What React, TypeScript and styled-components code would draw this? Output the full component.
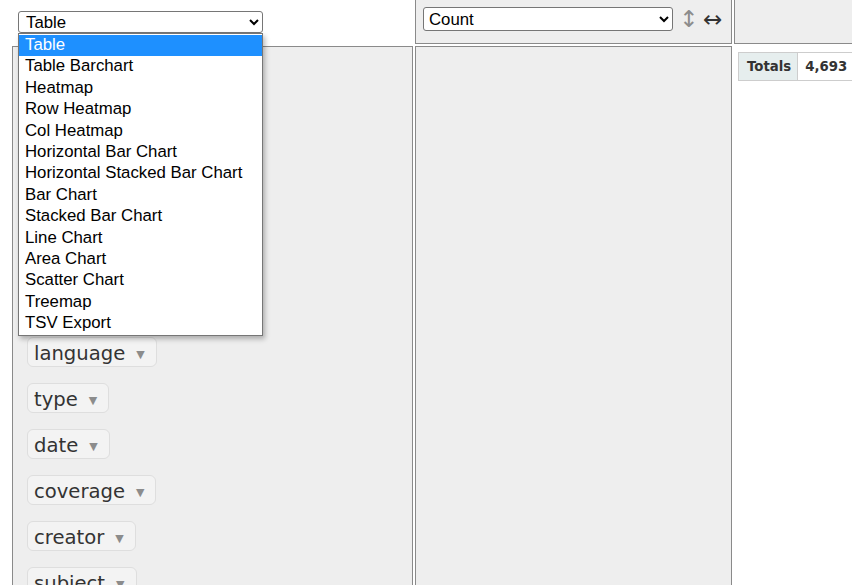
import React from "react";
import styled, { createGlobalStyle } from "styled-components";

const Global = createGlobalStyle`
  html, body { margin: 0; padding: 0; background: #fff; }
  body { font-family: "DejaVu Sans", Verdana, sans-serif; color: #333; }
`;

const Page = styled.div`
  width: 852px;
  height: 585px;
  overflow: hidden;
  position: relative;
`;

const Layout = styled.div`
  display: grid;
  grid-template-columns: 401px 317px 300px;
  grid-template-rows: 44px 560px;
  gap: 2px;
  margin-left: 12px;
`;

const Cell = styled.div<{ $panel?: boolean; $top?: boolean; $raised?: boolean }>`
  box-sizing: border-box;
  position: relative;
  background: ${(p) => (p.$panel ? "#eeeeee" : "#ffffff")};
  border: ${(p) => (p.$panel ? "1px solid #8a8a8a" : "none")};
  ${(p) => (p.$top ? "border-top: none;" : "")}
  ${(p) => (p.$raised ? "z-index: 5;" : "")}
`;

const RendererCell = styled(Cell)`
  padding: 11px 0 0 6px;
`;

const ValsCell = styled(Cell)`
  display: flex;
  align-items: flex-start;
  padding: 7px 0 0 7px;
`;

const UnusedCell = styled(Cell)`
  padding: 6px;
`;

const OutputCell = styled(Cell)`
  padding: 6px 0 0 4px;
`;

const NativeSelect = styled.select<{ $w: number; $h: number; $inset: number }>`
  box-sizing: border-box;
  width: ${(p) => p.$w}px;
  height: ${(p) => p.$h}px;
  padding: 0 6px 0 ${(p) => p.$inset}px;
  font-family: "Liberation Sans", Arial, sans-serif;
  font-size: 16.8px;
  color: #000;
  background: #fff;
  border: 1px solid #767676;
  border-radius: 3px;
  margin: 0;
`;

const OrderToggle = styled.span<{ $muted?: boolean }>`
  display: inline-block;
  width: 18px;
  margin-left: 6px;
  text-align: center;
  font-family: "DejaVu Sans", sans-serif;
  font-size: 23px;
  line-height: 24px;
  color: ${(p) => (p.$muted ? "#8c8c8c" : "#333")};
  cursor: pointer;
`;

const Popup = styled.ul`
  position: absolute;
  left: 6px;
  top: 33px;
  width: 245px;
  box-sizing: border-box;
  margin: 0;
  padding: 1px 0 1px;
  list-style: none;
  background: #fff;
  border: 1px solid #767676;
  box-shadow: 2px 3px 5px rgba(0, 0, 0, 0.28);
  z-index: 10;
`;

const PopupOption = styled.li<{ $active?: boolean }>`
  height: 21.4px;
  box-sizing: border-box;
  padding: 0 0 2px 6px;
  line-height: 19.4px;
  font-family: "Liberation Sans", Arial, sans-serif;
  font-size: 16.8px;
  white-space: nowrap;
  color: ${(p) => (p.$active ? "#fff" : "#000")};
  background: ${(p) => (p.$active ? "#1e90ff" : "transparent")};
`;

const AttrList = styled.ul`
  list-style: none;
  margin: 0;
  padding: 8px 0 0 8px;
  display: flex;
  flex-direction: column;
  align-items: flex-start;
  gap: 16px;
`;

const Attr = styled.li`
  display: inline-flex;
  align-items: center;
  box-sizing: border-box;
  height: 30px;
  padding: 2px 6px 0;
  border: 1px solid #dedede;
  border-radius: 6px;
  background: #f3f3f3;
  font-size: 19.6px;
  color: #333;
  white-space: nowrap;
  cursor: move;
`;

const Triangle = styled.span`
  color: #8c8c8c;
  font-size: 11px;
  margin: 2px 5px 0 11px;
  cursor: pointer;
`;

const TotalsTable = styled.table`
  border-collapse: collapse;
  font-family: "DejaVu Sans", Verdana, sans-serif;
  font-size: 13.3px;
`;

const TotalsHead = styled.th`
  background: #e6eeee;
  border: 1px solid #cdcdcd;
  padding: 6px 6px 6px 8px;
  font-weight: bold;
  text-align: left;
  color: #333;
`;

const TotalsValue = styled.td`
  background: #fff;
  border: 1px solid #cdcdcd;
  padding: 6px 8px 6px 7px;
  font-weight: bold;
  text-align: right;
  color: #333;
`;

const renderers = [
  "Table",
  "Table Barchart",
  "Heatmap",
  "Row Heatmap",
  "Col Heatmap",
  "Horizontal Bar Chart",
  "Horizontal Stacked Bar Chart",
  "Bar Chart",
  "Stacked Bar Chart",
  "Line Chart",
  "Area Chart",
  "Scatter Chart",
  "Treemap",
  "TSV Export",
];

const attributes = [
  "title",
  "identifier",
  "publisher",
  "format",
  "source",
  "rights",
  "language",
  "type",
  "date",
  "coverage",
  "creator",
  "subject",
  "contributor",
];

export default function App() {
  return (
    <Page>
      <Global />
      <Layout>
        <RendererCell $raised>
          <NativeSelect $w={245} $h={22} $inset={3} defaultValue="Table">
            {renderers.map((r) => (
              <option key={r} value={r}>
                {r}
              </option>
            ))}
          </NativeSelect>
          <Popup>
            {renderers.map((r, i) => (
              <PopupOption key={r} $active={i === 0}>
                {r}
              </PopupOption>
            ))}
          </Popup>
        </RendererCell>
        <ValsCell $panel $top>
          <NativeSelect $w={250} $h={24} $inset={1} defaultValue="Count">
            <option value="Count">Count</option>
            <option value="Sum">Sum</option>
          </NativeSelect>
          <OrderToggle $muted>↕</OrderToggle>
          <OrderToggle>↔</OrderToggle>
        </ValsCell>
        <Cell $panel $top />
        <UnusedCell $panel>
          <AttrList>
            {attributes.map((a) => (
              <Attr key={a}>
                {a}
                <Triangle>▼</Triangle>
              </Attr>
            ))}
          </AttrList>
        </UnusedCell>
        <Cell $panel />
        <OutputCell>
          <TotalsTable>
            <tbody>
              <tr>
                <TotalsHead>Totals</TotalsHead>
                <TotalsValue>4,693</TotalsValue>
              </tr>
            </tbody>
          </TotalsTable>
        </OutputCell>
      </Layout>
    </Page>
  );
}
